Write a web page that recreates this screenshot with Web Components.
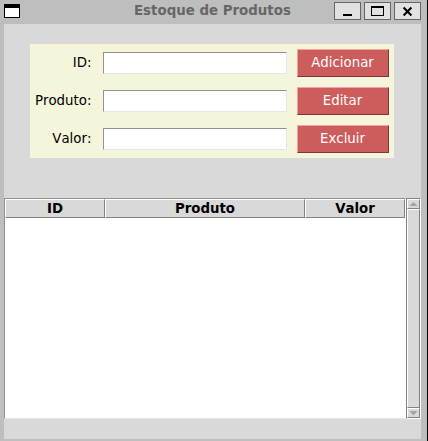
<!DOCTYPE html>
<html lang="pt">
<head>
<meta charset="utf-8">
<title>Estoque de Produtos</title>
<style>
html,body{margin:0;height:100%;overflow:hidden}
body{font:13.33px "DejaVu Sans",sans-serif;font-kerning:none;color:#000}
</style>
</head>
<body>
<app-window heading="Estoque de Produtos">
  <product-form>
    <form-row label="ID:" action="Adicionar"></form-row>
    <form-row label="Produto:" action="Editar"></form-row>
    <form-row label="Valor:" action="Excluir"></form-row>
  </product-form>
  <product-table>
    <table-heading>ID</table-heading>
    <table-heading>Produto</table-heading>
    <table-heading>Valor</table-heading>
    <scroll-bar slot="scroll"></scroll-bar>
  </product-table>
</app-window>
<script>
function define(name, markup) {
  customElements.define(name, class extends HTMLElement {
    constructor() {
      super();
      this.attachShadow({mode: 'open'}).innerHTML =
        '<style>*,:host{box-sizing:border-box}</style>' + markup(this);
    }
  });
}

define('window-button', el => `
<style>
:host{display:block;width:27px;height:18px;background:#e1e1e1;border:1px solid #666;}
svg{display:block;width:25px;height:16px}
</style>
<svg viewBox="0 0 25 16">${({
  min: '<path d="M8 11h9v2H8z"/>',
  max: '<path fill-rule="evenodd" d="M6 3h13v10H6zM7 5v7h11V5z"/>',
  close: '<path d="M8.6 4.6l7.8 7.8M16.4 4.6l-7.8 7.8" fill="none" stroke="#000" stroke-width="2.1"/>'
})[el.getAttribute('kind')]}</svg>`);

define('app-window', el => `
<style>
:host{display:flex;flex-direction:column;width:428px;height:441px;background:#bebebe;border-right:1px solid #000;padding:0 6px 2px 4px}
header{height:24px;flex:none;display:grid;grid-template-columns:16px 1fr auto}
.icon{width:16px;height:14px;margin-top:4px;background:#fff;border:1px solid #000;border-top-width:4px}
h1{margin:0;font:bold 13.33px/21px "DejaVu Sans",sans-serif;font-kerning:none;letter-spacing:.02px;color:#666;padding-left:114px;white-space:nowrap}
nav{display:flex;gap:3px;padding-top:2px}
main{flex:1;background:#d9d9d9;display:flex;flex-direction:column}
</style>
<header><div class="icon"></div><h1>${el.getAttribute('heading')}</h1>
<nav><window-button kind="min"></window-button><window-button kind="max"></window-button><window-button kind="close"></window-button></nav></header>
<main><slot></slot></main>`);

define('product-form', () => `
<style>
:host{display:block;width:364px;height:114px;margin:20px 0 40px 26px;background:#f5f5dc}
</style><slot></slot>`);

define('form-row', el => `
<style>
:host{display:grid;grid-template-columns:62px 185px 92px;column-gap:10px;height:38px;align-items:center}
label{text-align:right;line-height:18px;padding:0 .6px 1px 0}
input{width:184px;height:22px;margin:0 0 0 1px;padding:1px 3px;border:1px solid;border-color:#919191 #e6e6e6 #e6e6e6 #919191;background:#fff;border-radius:0;outline:0;font:inherit}
button{width:92px;height:28px;margin:0;padding:0 1px 2px 0;border:1px solid;border-color:#f2a3a3 #7b3737 #7b3737 #f2a3a3;background:#cd5c5c;color:#fff;font:inherit;font-kerning:none;border-radius:0}
</style>
<label>${el.getAttribute('label')}</label><input><button>${el.getAttribute('action')}</button>`);

define('product-table', () => `
<style>
:host{display:flex;width:417px;height:221px}
.view{width:402px;background:#fff;border:1px solid #919191;border-right-color:#fff;border-bottom-color:#e6e6e6}
.head{display:grid;grid-template-columns:100px 200px 100px;height:19px}
</style>
<div class="view"><div class="head"><slot></slot></div></div><slot name="scroll"></slot>`);

define('table-heading', () => `
<style>
:host{display:block;background:#d9d9d9;border:1px solid;border-color:#fff #828282 #828282 #fff;text-align:center;font-weight:bold;line-height:17px}
</style><slot></slot>`);

define('scroll-bar', () => `
<style>
:host{display:flex;flex-direction:column;width:15px;height:221px;background:#c3c3c3;border:1px solid;border-color:#828282 #fff #fff #828282}
div{background:#d9d9d9;border:1px solid;border-color:#fff #828282 #828282 #fff}
.arrow{height:10px;flex:none}
.thumb{flex:1}
svg{display:block;width:11px;height:8px}
</style>
<div class="arrow"><svg viewBox="0 0 11 8"><path fill="#a3a3a3" d="M5.5 2 9.5 6H1.5z"/></svg></div>
<div class="thumb"></div>
<div class="arrow"><svg viewBox="0 0 11 8"><path fill="#a3a3a3" d="M5.5 6.5 9.5 2H1.5z"/></svg></div>`);
</script>
</body>
</html>
